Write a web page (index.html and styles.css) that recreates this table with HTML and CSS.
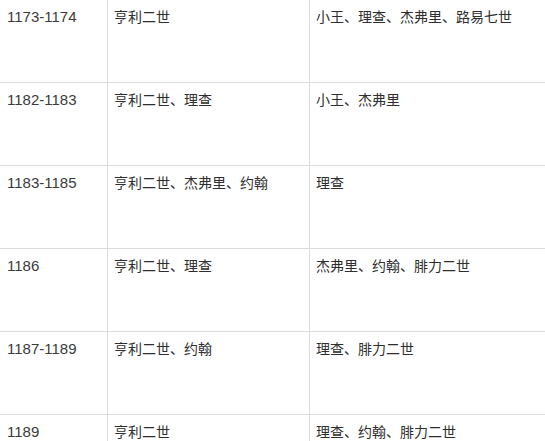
FILE: index.html
```html
<!DOCTYPE html>
<html lang="zh">
<head>
<meta charset="utf-8">
<link rel="stylesheet" href="styles.css">
</head>
<body>
<table class="grid">
  <colgroup>
    <col class="c1"><col class="c2"><col class="c3">
  </colgroup>
  <tbody>
    <tr><td class="year">1173-1174</td><td>亨利二世</td><td>小王、理查、杰弗里、路易七世</td></tr>
    <tr><td class="year">1182-1183</td><td>亨利二世、理查</td><td>小王、杰弗里</td></tr>
    <tr><td class="year">1183-1185</td><td>亨利二世、杰弗里、约翰</td><td>理查</td></tr>
    <tr><td class="year">1186</td><td>亨利二世、理查</td><td>杰弗里、约翰、腓力二世</td></tr>
    <tr><td class="year">1187-1189</td><td>亨利二世、约翰</td><td>理查、腓力二世</td></tr>
    <tr><td class="year">1189</td><td>亨利二世</td><td>理查、约翰、腓力二世</td></tr>
  </tbody>
</table>
</body>
</html>
```

FILE: styles.css
```css
html, body {
  margin: 0;
  padding: 0;
  background: #fff;
  overflow: hidden;
}
.grid {
  border-collapse: collapse;
  table-layout: fixed;
  width: 640px;
  margin: -1px 0 0 -1px;
  font-family: "Liberation Sans", "Noto Sans CJK SC", sans-serif;
  font-size: 14px;
  line-height: 20px;
  color: #2e2e2e;
}
.c1 { width: 108px; }
.c2 { width: 202px; }
.c3 { width: 330px; }
.grid td {
  border: 1px solid #dcdcdc;
  height: 83px;
  box-sizing: border-box;
  padding: 7px 6px 0 6px;
  vertical-align: top;
}
.grid td.year {
  font-size: 15px;
  padding-left: 7px;
  color: #3a3a3a;
}
```
